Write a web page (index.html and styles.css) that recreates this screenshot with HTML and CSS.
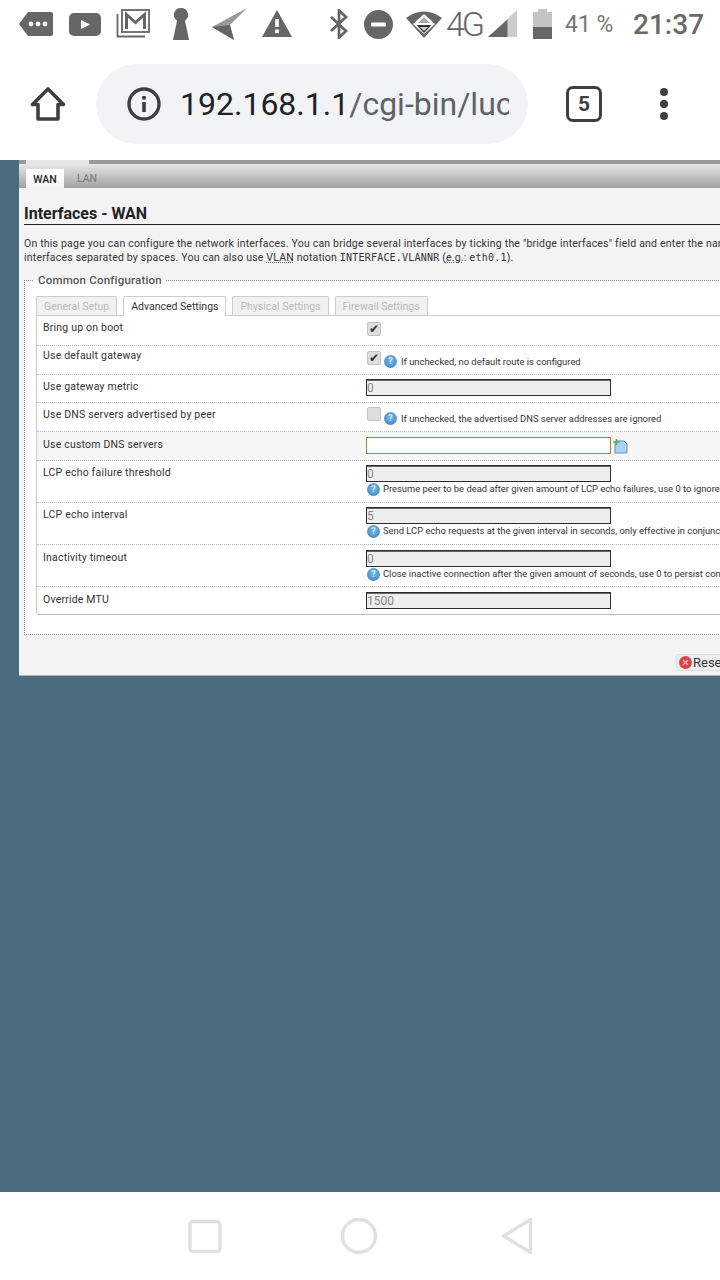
FILE: index.html
```html
<!DOCTYPE html>
<html lang="en">
<head>
<meta charset="utf-8">
<title>Interfaces - WAN</title>
<link rel="stylesheet" href="styles.css">
</head>
<body>
<div class="phone">
  <div class="status">
    <svg class="si s-tag" width="34" height="26" viewBox="0 0 34 26"><path d="M0 13 9 1h23a2 2 0 0 1 2 2v20a2 2 0 0 1-2 2H9z" fill="#666"/><circle cx="12" cy="13" r="2.400" fill="#fff"/><circle cx="19" cy="13" r="2.400" fill="#fff"/><circle cx="26" cy="13" r="2.400" fill="#fff"/></svg>
    <svg class="si s-yt" width="32" height="23" viewBox="0 0 32 23"><rect width="32" height="23" rx="5" fill="#666"/><path d="M12 7l9 4.500-9 4.500z" fill="#fff"/></svg>
    <svg class="si s-gm" width="34" height="29" viewBox="0 0 34 29"><path d="M1.500 5v22.500H29" fill="none" stroke="#666" stroke-width="1.800"/><rect x="6" y="1" width="27" height="22" fill="#fff" stroke="#666" stroke-width="1.800"/><path d="M10.500 20V5.500l9 8 9-8V20" fill="none" stroke="#666" stroke-width="3"/></svg>
    <svg class="si s-key" width="18" height="32" viewBox="0 0 18 32"><path d="M9 0a7 7 0 0 1 4 12.800L17 32H1l4-19.200A7 7 0 0 1 9 0z" fill="#666"/></svg>
    <svg class="si s-nav" width="35" height="32" viewBox="0 0 35 32"><path d="M35 0 0 19l22 13-4-15z" fill="#999"/><path d="M0 19l18-2 4 15z" fill="#666"/></svg>
    <svg class="si s-warn" width="30" height="27" viewBox="0 0 30 27"><path d="M15 0l15 27H0z" fill="#666"/><rect x="13.200" y="9" width="3.600" height="8" fill="#fff"/><rect x="13.200" y="19.500" width="3.600" height="3.600" fill="#fff"/></svg>
    <svg class="si s-bt" width="20" height="30" viewBox="0 0 20 30"><path d="M2 8l15 14-7 6.500V1.500L17 8 2 22" fill="none" stroke="#666" stroke-width="2.800"/></svg>
    <svg class="si s-dnd" width="29" height="29" viewBox="0 0 29 29"><circle cx="14.500" cy="14.500" r="14.500" fill="#666"/><rect x="7" y="12.500" width="15" height="4" rx="1" fill="#fff"/></svg>
    <svg class="si s-wifi" width="36" height="29" viewBox="0 0 36 29"><path d="M0 9a28 28 0 0 1 36 0L18 29z" fill="#666"/><path d="M18 5 29 15 18 25 7 15z" fill="#fff"/><path d="M18 8l6 6H12z" fill="#aaa"/><path d="M10.500 16h15L18 24z" fill="#333"/><path d="M14 18h8l-4 4z" fill="#ccc"/></svg>
    <span class="net">4G</span>
    <svg class="si s-sig" width="29" height="27" viewBox="0 0 29 27"><path d="M29 0v27H0z" fill="#ccc"/><path d="M19.500 9.500V27H0z" fill="#666"/></svg>
    <svg class="si s-bat" width="19" height="30" viewBox="0 0 19 30"><path d="M5 0h9v3h5v27H0V3h5z" fill="#c4c4c4"/><rect y="18" width="19" height="12" fill="#666"/></svg>
    <span class="pct">41 %</span>
    <span class="clock">21:37</span>
  </div>

  <div class="toolbar">
    <svg class="home" width="36" height="36" viewBox="0 0 36 36"><path d="M18 3 2.500 18.500H8V33h20V18.500h5.500z" fill="none" stroke="#3c4043" stroke-width="3.600" stroke-linejoin="round"/></svg>
    <div class="omni">
      <svg class="info" width="34" height="34" viewBox="0 0 34 34"><circle cx="17" cy="17" r="15" fill="none" stroke="#3c4043" stroke-width="3.400"/><rect x="15.200" y="15" width="3.600" height="10" fill="#3c4043"/><rect x="15.200" y="9" width="3.600" height="3.600" fill="#3c4043"/></svg>
      <div class="url"><span class="host">192.168.1.1</span>/cgi-bin/luc</div>
    </div>
    <div class="tabs-btn">5</div>
    <svg class="menu" width="10" height="34" viewBox="0 0 10 34"><circle cx="5" cy="5" r="4" fill="#3c4043"/><circle cx="5" cy="17" r="4" fill="#3c4043"/><circle cx="5" cy="29" r="4" fill="#3c4043"/></svg>
  </div>

  <div class="viewport">
    <div class="panel">
      <div class="topbar"><div class="topbar-active"></div></div>
      <div class="subnav">
        <div class="subtab subtab-on">WAN</div>
        <div class="subtab">LAN</div>
      </div>
      <div class="content">
        <h2 class="title">Interfaces - WAN</h2>
        <p class="desc">On this page you can configure the network interfaces. You can bridge several interfaces by ticking the "bridge interfaces" field and enter the nam<br>interfaces separated by spaces. You can also use <abbr class="ab">VLAN</abbr> notation <code class="mono">INTERFACE.VLANNR</code> (<abbr class="ab">e.g.</abbr>: <code class="mono">eth0.1</code>).</p>

        <fieldset class="fs">
          <legend class="fs-legend">Common Configuration</legend>
          <div class="ctabs">
            <div class="ctab">General Setup</div>
            <div class="ctab ctab-on">Advanced Settings</div>
            <div class="ctab">Physical Settings</div>
            <div class="ctab">Firewall Settings</div>
          </div>
          <div class="sect">
            <div class="row r30">
              <div class="lbl">Bring up on boot</div>
              <div class="fld fld-low"><div class="check-line"><span class="cb">✔</span></div></div>
            </div>
            <div class="row r29">
              <div class="lbl lbl-high">Use default gateway</div>
              <div class="fld"><div class="check-line"><span class="cb">✔</span><span class="q">?</span><span class="hint hint-low">If unchecked, no default route is configured</span></div></div>
            </div>
            <div class="row r28">
              <div class="lbl">Use gateway metric</div>
              <div class="fld"><div class="inp">0</div></div>
            </div>
            <div class="row r29">
              <div class="lbl">Use DNS servers advertised by peer</div>
              <div class="fld"><div class="check-line"><span class="cb cb-high"></span><span class="q">?</span><span class="hint hint-low">If unchecked, the advertised DNS server addresses are ignored</span></div></div>
            </div>
            <div class="row r29 row-hover">
              <div class="lbl lbl-low">Use custom DNS servers</div>
              <div class="fld fld-low fld-row">
                <div class="inp inp-focus"></div>
                <svg class="add" width="15" height="15" viewBox="0 0 15 15"><path d="M3 2h8l3 3v9H2V3z" fill="#a9d3ee" stroke="#5b93b5"/><path d="M3.500 0v6M0.500 3h6" stroke="#4fb34a" stroke-width="1.600"/></svg>
              </div>
            </div>
            <div class="row r42">
              <div class="lbl">LCP echo failure threshold</div>
              <div class="fld">
                <div class="inp">0</div>
                <div class="help"><span class="q q-first">?</span><span class="hint">Presume peer to be dead after given amount of LCP echo failures, use 0 to ignore</span></div>
              </div>
            </div>
            <div class="row r42">
              <div class="lbl">LCP echo interval</div>
              <div class="fld">
                <div class="inp">5</div>
                <div class="help"><span class="q q-first">?</span><span class="hint">Send LCP echo requests at the given interval in seconds, only effective in conjunc</span></div>
              </div>
            </div>
            <div class="row r42">
              <div class="lbl lbl-low">Inactivity timeout</div>
              <div class="fld fld-low">
                <div class="inp">0</div>
                <div class="help"><span class="q q-first">?</span><span class="hint">Close inactive connection after the given amount of seconds, use 0 to persist con</span></div>
              </div>
            </div>
            <div class="row row-last">
              <div class="lbl lbl-low">Override MTU</div>
              <div class="fld fld-low"><div class="inp">1500</div></div>
            </div>
          </div>
        </fieldset>

        <div class="actions">
          <div class="btn"><svg class="btn-ic" width="13" height="13" viewBox="0 0 13 13"><circle cx="6.500" cy="6.500" r="6.500" fill="#d9434b"/><path d="M4 4l5 5M9 4l-5 5" stroke="#f3b0b0" stroke-width="1.400"/></svg>Rese</div>
        </div>
      </div>
    </div>
  </div>

  <div class="navbar">
    <svg width="34" height="35" viewBox="0 0 34 35"><rect x="2" y="2.500" width="30" height="30" rx="3" fill="none" stroke="#e0e0e0" stroke-width="3.400"/></svg>
    <svg width="38" height="38" viewBox="0 0 38 38"><circle cx="19" cy="19" r="16.500" fill="none" stroke="#e0e0e0" stroke-width="3.400"/></svg>
    <svg class="nav-back" width="32" height="38" viewBox="0 0 32 38"><path d="M29.500 2.500v33L2.500 19z" fill="none" stroke="#e0e0e0" stroke-width="3.400" stroke-linejoin="round"/></svg>
  </div>
</div>
</body>
</html>
```

FILE: styles.css
```css
* { box-sizing: border-box; }
html, body { margin: 0; padding: 0; }
body { font-family: Roboto, "Liberation Sans", sans-serif; background: #4b6b7e; }

.phone { width: 720px; height: 1280px; display: flex; flex-direction: column; overflow: hidden; }

/* Status bar */
.status { height: 48px; flex: none; background: #fff; display: flex; align-items: center; padding-left: 19px; color: #666; }
.si { flex: none; display: block; }
.s-tag { margin-top: -1px; }
.s-yt { margin-left: 16px; }
.s-gm { margin-left: 15px; margin-top: -1px; }
.s-key { margin-left: 22px; }
.s-nav { margin-left: 22px; }
.s-warn { margin-left: 15px; margin-top: -1px; }
.s-bt { margin-left: 37px; }
.s-dnd { margin-left: 15px; margin-top: 1px; }
.s-wifi { margin-left: 13px; margin-top: -1px; }
.net { margin-left: 4px; width: 38px; font-size: 34px; font-weight: 300; letter-spacing: -3px; line-height: 48px; white-space: nowrap; }
.s-sig { margin-left: 4px; margin-top: -1px; }
.s-bat { margin-left: 16px; }
.pct { margin-left: 13px; font-size: 23px; color: #777; width: 68px; white-space: nowrap; }
.clock { font-size: 28px; font-weight: 500; color: #6a6a6a; white-space: nowrap; }

/* Browser toolbar */
.toolbar { height: 112px; flex: none; background: #fff; display: flex; align-items: center; padding: 0 0 0 30px; }
.home { flex: none; }
.omni { margin-left: 30px; width: 432px; height: 80px; border-radius: 40px; background: #f1f3f4; display: flex; align-items: center; padding: 0 19px 0 31px; flex: none; }
.info { flex: none; }
.url { margin-left: 19px; font-size: 32px; color: #5f6368; white-space: nowrap; overflow: hidden; flex: 1; min-width: 0; }
.host { color: #202124; }
.tabs-btn { margin-left: 38px; flex: none; width: 36px; height: 36px; border: 3.600px solid #3c4043; border-radius: 7px; font-size: 21px; font-weight: 700; color: #3c4043; display: flex; align-items: center; justify-content: center; }
.menu { margin-left: 57px; flex: none; }

/* Web page */
.viewport { flex: 1; min-height: 0; overflow: hidden; background: #4b6b7e; padding-left: 19px; }
.panel { width: 1000px; background: #f3f3f3; border-bottom: 1px solid #b4b8bb; }
.topbar { height: 4px; background: #999; padding-left: 7px; }
.topbar-active { width: 63px; height: 4px; background: #e6e6e6; }
.subnav { height: 24px; padding: 4px 0 0 7px; display: flex; background: linear-gradient(#e6e6e6, #a2a2a2); font-size: 10.500px; }
.subtab { height: 20px; line-height: 21px; color: #777; padding: 0 13px; }
.subtab-on { width: 38px; padding: 0; text-align: center; background: linear-gradient(#fff, #f3f3f3); color: #222; font-weight: 500; border-top: 1px solid #ddd; }

.content { padding: 17px 0 0 5px; }
.title { margin: 0; height: 20px; font-size: 16px; line-height: 18px; font-weight: 700; color: #222; border-bottom: 1px solid #222; }
.desc { margin: 12px 0 0; font-size: 10.500px; line-height: 14px; color: #333; white-space: nowrap; letter-spacing: 0.2px; }
.ab { text-decoration: underline dotted #666; }
.mono { font-family: "DejaVu Sans Mono", monospace; font-size: 10px; letter-spacing: 0.2px; color: #333; }

.fs { margin: 8px 0 0; padding: 9px 0 19px 11px; background: #fff; border: 0; border-top: 1px dotted #888; border-left: 1px dotted #888; border-bottom: 1px dotted #888; min-width: 0; }
.fs-legend { margin-left: -2px; padding: 0 4px; font-size: 11.500px; font-weight: 500; color: #555; line-height: 14px; letter-spacing: 0.2px; }

.ctabs { display: flex; gap: 6px; height: 19px; font-size: 10.500px; }
.ctab { height: 19px; line-height: 19px; padding: 0 7px; background: #f1f1f1; border: 1px solid #ccc; border-bottom: 0; border-radius: 2px 2px 0 0; color: #bbb; white-space: nowrap; }
.ctab-on { background: #fff; color: #333; margin-bottom: -1px; height: 20px; position: relative; z-index: 1; }

.sect { border-top: 1px solid #ccc; border-left: 1px solid #ccc; border-bottom: 1px solid #bbb; border-bottom-left-radius: 3px; }
.row { display: flex; border-bottom: 1px dotted #bbb; font-size: 10.500px; color: #333; padding-left: 6px; }
.r28 { height: 28px; }
.r29 { height: 29px; }
.r30 { height: 30px; }
.r42 { height: 42px; }
.row-last { border-bottom: 0; height: 27px; }
.row-hover { background: #f6f6f6; }
.lbl { width: 323px; flex: none; padding-top: 5px; line-height: 14px; white-space: nowrap; letter-spacing: 0.2px; }
.lbl-low { padding-top: 6px; }
.lbl-high { padding-top: 3px; }
.fld { flex: none; width: 600px; padding-top: 4px; white-space: nowrap; }
.fld-low { padding-top: 5px; }
.fld-row { display: flex; align-items: flex-start; }
.inp { width: 245px; height: 17px; background: #eee; border: 1px solid #2c2c2c; box-shadow: inset 0 1px 0 #666; color: #888; font-size: 12px; line-height: 16px; }
.inp-focus { background: #fff; border-color: #a8832f; box-shadow: inset 0 0 1px #d8ae55; }
.add { margin: 2px 0 0 2px; flex: none; }
.check-line { display: flex; align-items: flex-start; }
.cb { flex: none; width: 14px; height: 14px; margin: 1px 3px 0 1px; background: #ddd; border: 1px solid #c4c4c4; border-radius: 2px; color: #333; font-size: 12px; line-height: 12px; text-align: center; font-family: "DejaVu Sans", sans-serif; }
.cb-high { margin-top: 0; }
.q { flex: none; width: 13px; height: 13px; margin-top: 5px; border-radius: 50%; background: radial-gradient(circle at 50% 40%, #7fb8e6, #2f7fc0); color: #cfe6f8; font-size: 9px; line-height: 13px; text-align: center; font-weight: 700; }
.hint { margin-left: 4px; color: #333; font-size: 9.400px; line-height: 14px; }
.hint-low { margin-top: 5px; }
.help { display: flex; align-items: center; height: 14px; padding-left: 1px; }
.q-first { margin-top: 0; }
.help .hint { margin-left: 3px; }

.actions { height: 40px; padding: 19px 0 0 652px; }
.btn { width: 80px; height: 17px; display: flex; align-items: center; gap: 1px; padding-left: 2px; background: #eee; border: 1px solid #ddd; border-radius: 3px; font-size: 13px; color: #333; }
.btn-ic { flex: none; }

/* Android nav bar */
.navbar { height: 88px; flex: none; background: #fff; display: flex; align-items: center; padding-left: 188px; gap: 118px; }
.nav-back { margin-left: 5px; }
```
